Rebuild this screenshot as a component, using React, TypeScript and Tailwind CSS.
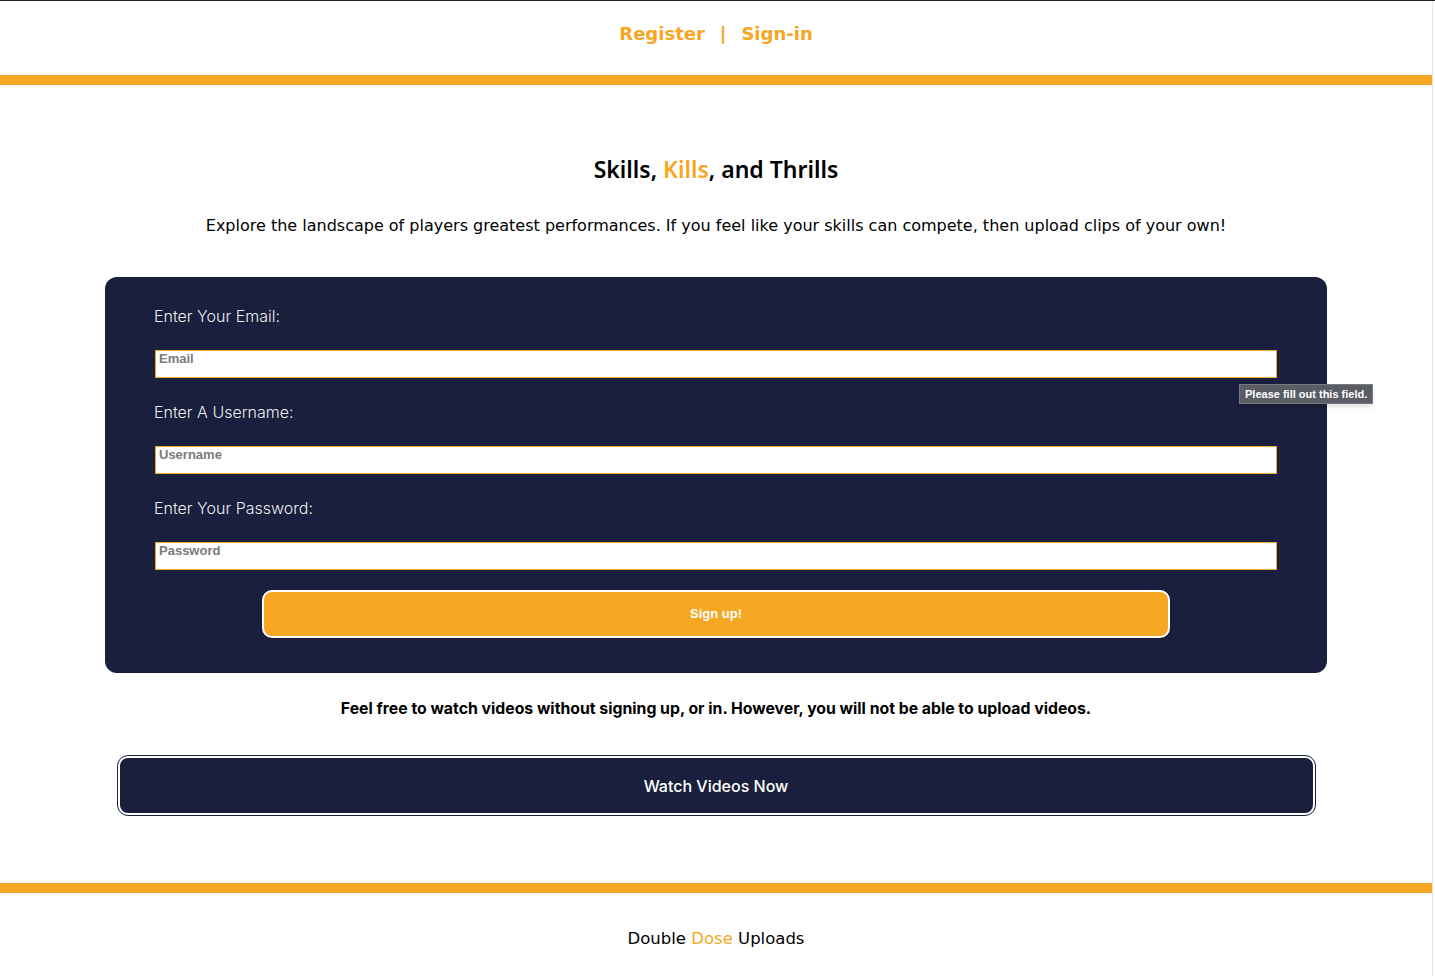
import React from "react";

function Field({ label, placeholder, type, first }: { label: string; placeholder: string; type: string; first?: boolean }) {
  return (
    <div className="flex flex-col">
      <label
        className={`${first ? "mt-[27px]" : "mt-[22px]"} h-[24px] leading-[24px] text-[16px] font-light text-white/95 pl-[49px] font-['Inter','Liberation_Sans',sans-serif]`}
      >
        {label}
      </label>
      <div className="px-[50px] mt-[22px]">
        <input
          type={type}
          placeholder={placeholder}
          className="block w-full h-[28px] bg-white border border-[#F5A623] px-[3px] pb-[11px] pt-0 text-[13px] font-bold text-gray-700 placeholder:text-[#7a7a7a] outline-none font-['Liberation_Sans',Arial,sans-serif]"
        />
      </div>
    </div>
  );
}

export default function App() {
  return (
    <div className="w-[1435px] min-h-[976px] bg-white flex flex-col relative overflow-hidden">
      <div className="h-[1px] bg-[#222]" />
      <div className="flex flex-1">
        <div className="w-[1432px] flex flex-col">
          <header className="h-[74px] flex items-center justify-center gap-[15px] text-[18px] font-bold pb-[10px] text-[#F5A623] font-['DejaVu_Sans',sans-serif]">
            <span>Register</span>
            <span>|</span>
            <span>Sign-in</span>
          </header>
          <div className="h-[10px] bg-[#F5A623]" />

          <main className="flex flex-col items-center">
            <h1 className="mt-[69px] h-[30px] leading-[30px] text-[23px] font-semibold text-black font-['Noto_Sans',sans-serif]">
              Skills, <span className="text-[#F5A623]">Kills</span>, and Thrills
            </h1>
            <p className="mt-[30px] h-[24px] leading-[24px] text-[16px] text-black font-['DejaVu_Sans',sans-serif]">
              Explore the landscape of players greatest performances. If you feel like your skills can compete, then upload clips of your own!
            </p>

            <section className="mt-[39px] w-[1222px] h-[396px] rounded-[12px] bg-[#1A1F3D] flex flex-col">
              <Field first label="Enter Your Email:" placeholder="Email" type="email" />
              <Field label="Enter A Username:" placeholder="Username" type="text" />
              <Field label="Enter Your Password:" placeholder="Password" type="password" />
              <div className="flex justify-center mt-[20px]">
                <button className="w-[908px] h-[48px] rounded-[10px] border-2 border-white bg-[#F5A623] text-white text-[13px] font-bold font-['Liberation_Sans',Arial,sans-serif]">
                  Sign up!
                </button>
              </div>
            </section>

            <p className="mt-[25px] h-[22px] leading-[22px] text-[15.8px] font-bold text-black font-['Inter','Liberation_Sans',sans-serif]">
              Feel free to watch videos without signing up, or in. However, you will not be able to upload videos.
            </p>

            <button className="mt-[36px] w-[1197px] h-[59px] rounded-[10px] bg-[#1A1F3D] text-white text-[16px] font-medium border-2 border-white outline outline-1 outline-[#1A1F3D] font-['Inter','Liberation_Sans',sans-serif]">
              Watch Videos Now
            </button>
          </main>

          <div className="mt-[68px] h-[10px] bg-[#F5A623]" />
          <footer className="h-[83px] pt-[10px] flex items-center justify-center text-[16.5px] text-black font-['DejaVu_Sans',sans-serif]">
            <span>
              Double <span className="text-[#F5A623]">Dose</span> Uploads
            </span>
          </footer>
        </div>
        <div className="w-[1px] bg-[#e5e5e5]" />
        <div className="flex-1 bg-white" />
      </div>

      <div className="absolute left-[1239px] top-[384px] h-[20px] px-[5px] flex items-center bg-[#5a5c66] border border-[#7a7a7a] text-white text-[11px] font-semibold shadow-md font-['Liberation_Sans',Arial,sans-serif]">
        Please fill out this field.
      </div>
    </div>
  );
}
